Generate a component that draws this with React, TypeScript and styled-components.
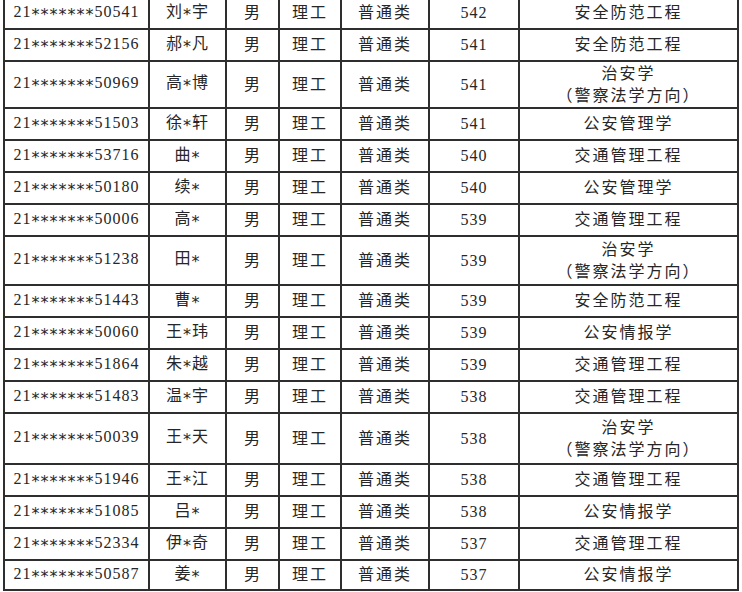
import React from "react";
import styled, { createGlobalStyle } from "styled-components";

const GlobalStyle = createGlobalStyle`
  html, body {
    margin: 0;
    padding: 0;
    background: #ffffff;
    overflow: hidden;
  }
`;

type Row = {
  id: string;
  name: string;
  score: number;
  major: string[];
  h: number;
};

const rows: Row[] = [
  { id: "21*******50541", name: "刘*宇", score: 542, major: ["安全防范工程"], h: 32 },
  { id: "21*******52156", name: "郝*凡", score: 541, major: ["安全防范工程"], h: 32 },
  { id: "21*******50969", name: "高*博", score: 541, major: ["治安学", "（警察法学方向）"], h: 47 },
  { id: "21*******51503", name: "徐*轩", score: 541, major: ["公安管理学"], h: 32 },
  { id: "21*******53716", name: "曲*", score: 540, major: ["交通管理工程"], h: 32 },
  { id: "21*******50180", name: "续*", score: 540, major: ["公安管理学"], h: 32 },
  { id: "21*******50006", name: "高*", score: 539, major: ["交通管理工程"], h: 32 },
  { id: "21*******51238", name: "田*", score: 539, major: ["治安学", "（警察法学方向）"], h: 49 },
  { id: "21*******51443", name: "曹*", score: 539, major: ["安全防范工程"], h: 32 },
  { id: "21*******50060", name: "王*玮", score: 539, major: ["公安情报学"], h: 32 },
  { id: "21*******51864", name: "朱*越", score: 539, major: ["交通管理工程"], h: 32 },
  { id: "21*******51483", name: "温*宇", score: 538, major: ["交通管理工程"], h: 32 },
  { id: "21*******50039", name: "王*天", score: 538, major: ["治安学", "（警察法学方向）"], h: 51 },
  { id: "21*******51946", name: "王*江", score: 538, major: ["交通管理工程"], h: 32 },
  { id: "21*******51085", name: "吕*", score: 538, major: ["公安情报学"], h: 32 },
  { id: "21*******52334", name: "伊*奇", score: 537, major: ["交通管理工程"], h: 32 },
  { id: "21*******50587", name: "姜*", score: 537, major: ["公安情报学"], h: 30 },
];

const colWidths = [145, 77, 53, 62, 88, 90, 219];

const Page = styled.div`
  padding-left: 3px;
  margin-top: -4px;
`;

const Table = styled.table`
  border-collapse: collapse;
  table-layout: fixed;
  width: 736px;
  font-family: "Liberation Serif", "Noto Sans CJK SC", serif;
  font-size: 16px;
  color: #262626;
`;

const Tr = styled.tr<{ $h: number }>`
  height: ${(p) => p.$h}px;
`;

const Td = styled.td<{ $wide?: boolean }>`
  border: 2px solid #2e2e2e;
  padding: 0;
  text-align: center;
  vertical-align: middle;
  line-height: 22px;
  letter-spacing: ${(p) => (p.$wide ? 2 : 1)}px;
  white-space: nowrap;
`;

const Line = styled.div`
  display: block;
`;

// masked characters sit mid-height in the source font
const Star = styled.span`
  font-family: "DejaVu Sans", sans-serif;
  vertical-align: -3px;
`;

function Masked({ text }: { text: string }) {
  return (
    <>
      {text.split("").map((c, i) => (c === "*" ? <Star key={i}>*</Star> : c))}
    </>
  );
}

export default function App() {
  return (
    <>
      <GlobalStyle />
      <Page>
        <Table>
          <colgroup>
            {colWidths.map((w, i) => (
              <col key={i} style={{ width: w }} />
            ))}
          </colgroup>
          <tbody>
            {rows.map((r) => (
              <Tr key={r.id} $h={r.h}>
                <Td>
                  <Masked text={r.id} />
                </Td>
                <Td>
                  <Masked text={r.name} />
                </Td>
                <Td>男</Td>
                <Td $wide>理工</Td>
                <Td $wide>普通类</Td>
                <Td>{r.score}</Td>
                <Td $wide>
                  {r.major.map((m) => (
                    <Line key={m}>{m}</Line>
                  ))}
                </Td>
              </Tr>
            ))}
          </tbody>
        </Table>
      </Page>
    </>
  );
}
